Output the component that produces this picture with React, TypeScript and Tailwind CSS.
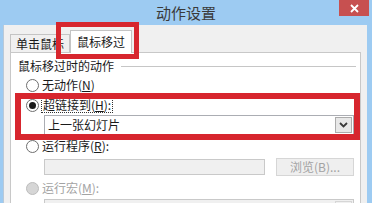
import React from "react";

const font = { fontFamily: '"Noto Sans CJK SC", "Noto Sans", sans-serif' };

function Radio({ checked = false, disabled = false }: { checked?: boolean; disabled?: boolean }) {
  return (
    <span
      className={
        "flex items-center justify-center w-[13px] h-[13px] rounded-full border shrink-0 " +
        (disabled ? "border-[#bcbcbc] bg-[#d6d6d6]" : "border-[#6e6e6e] bg-white")
      }
    >
      {checked && <span className="w-[7px] h-[7px] rounded-full bg-[#1a1a1a]" />}
    </span>
  );
}

function Chevron() {
  return (
    <svg width="9" height="6" viewBox="0 0 9 6">
      <path d="M1 1 L4.5 4.5 L8 1" fill="none" stroke="#3a3a3a" strokeWidth="1.8" />
    </svg>
  );
}

export default function App() {
  return (
    <div
      className="relative w-[372px] h-[203px] overflow-hidden bg-[#9dcbf2] text-[12px] leading-[14px] text-[#1a1a1a]"
      style={font}
    >
      {/* title bar */}
      <div className="h-[25px] flex items-center justify-center text-[15px] text-[#3a3a3a]">动作设置</div>
      <div className="absolute left-[339px] top-0 w-[30px] h-[16px] bg-[#c75050] flex items-center justify-center">
        <svg width="9" height="9" viewBox="0 0 9 9">
          <path d="M1 1 L8 8 M8 1 L1 8" stroke="white" strokeWidth="1.8" />
        </svg>
      </div>

      {/* dialog body */}
      <div className="ml-[3px] w-[364px] h-[178px] bg-[#f0f0f0] border-l border-[#b9c9d8]">
        <div className="flex items-end h-[27px] pl-[6px]">
          <div className="w-[60px] h-[18px] border border-b-0 border-[#c4c4c4] bg-[#f0f0f0] flex items-center justify-center pt-[1px]">
            单击鼠标
          </div>
          <div className="relative z-10 w-[62px] h-[23px] -mb-px border border-b-0 border-[#c4c4c4] bg-white flex items-center justify-center pb-[1px]">
            鼠标移过
          </div>
        </div>

        <div className="ml-[6px] w-[351px] h-[160px] bg-white border border-[#c8c8c8] pl-[15px] pr-[6px]">
          {/* group title */}
          <div className="flex items-center mt-[6px] h-[14px] -ml-[8px]">
            <span>鼠标移过时的动作</span>
            <span className="flex-1 h-px bg-[#c6c6c6] ml-[7px] mr-[-2px]" />
          </div>

          <div className="flex items-center gap-[3px] mt-[5px] h-[14px]">
            <Radio />
            <span>
              无动作(<span className="underline">N</span>)
            </span>
          </div>

          <div className="flex items-center gap-[3px] mt-[6px] h-[14px]">
            <Radio checked />
            <span className="outline outline-1 outline-dotted outline-[#333] px-px">
              超链接到(<span className="underline">H</span>):
            </span>
          </div>

          <div className="ml-[18px] mt-[3px] h-[20px] border border-[#abadb3] bg-white flex items-center justify-between pl-[3px] pr-px">
            <span>上一张幻灯片</span>
            <span className="w-[17px] h-[16px] border border-[#acacac] bg-[#e8e8e8] flex items-center justify-center">
              <Chevron />
            </span>
          </div>

          <div className="flex items-center gap-[3px] mt-[4px] h-[14px]">
            <Radio />
            <span>
              运行程序(<span className="underline">R</span>):
            </span>
          </div>

          <div className="flex ml-[18px] mt-[6px] h-[17px]">
            <div className="w-[221px] h-[16px] border border-[#c9c9c9] bg-[#f0f0f0]" />
            <div className="ml-[11px] flex-1 h-[18px] -mt-px border border-[#d6d6d6] bg-[#efefef] flex items-center justify-center text-[#a3a3a3]">
              浏览(B)...
            </div>
          </div>

          <div className="flex items-center gap-[3px] mt-[5px] h-[14px] text-[#a3a3a3]">
            <Radio disabled />
            <span>
              运行宏(<span className="underline">M</span>):
            </span>
          </div>

          <div className="ml-[18px] mt-[4px] h-[20px] border border-[#c9c9c9] bg-[#f0f0f0] flex justify-end pr-px pt-px">
            <span className="w-[17px] h-[16px] border border-[#d6d6d6] bg-[#f0f0f0]" />
          </div>
        </div>
      </div>

      {/* annotation boxes */}
      <div className="absolute left-[56px] top-[22px] w-[83px] h-[37px] border-[5px] border-[#d7262e] z-20" />
      <div className="absolute left-[15px] top-[93px] w-[345px] h-[47px] border-[6px] border-[#d7262e] z-20" />
    </div>
  );
}
